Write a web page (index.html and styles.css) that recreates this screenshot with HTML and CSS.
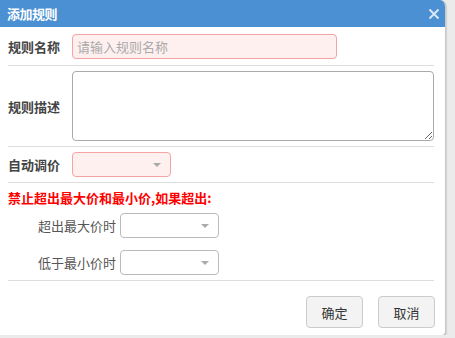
FILE: index.html
```html
<!DOCTYPE html>
<html lang="zh-CN">
<head>
    <meta charset="UTF-8">
    <title>添加规则</title>
    <link rel="stylesheet" href="styles.css">
</head>
<body>
    <div class="dialog">
        <div class="dialog-header">
            <span class="dialog-title">添加规则</span>
            <span class="dialog-close">
                <svg width="12" height="12" viewBox="0 0 12 12">
                    <path d="M1.5 1.5 L10.5 10.5 M10.5 1.5 L1.5 10.5" stroke="#d8e8f7" stroke-width="2"/>
                </svg>
            </span>
        </div>

        <div class="dialog-body">
            <div class="form-row row-name">
                <label class="form-label">规则名称</label>
                <input type="text" class="input required name-input" placeholder="请输入规则名称">
            </div>

            <div class="form-row row-desc">
                <label class="form-label">规则描述</label>
                <textarea class="textarea"></textarea>
            </div>

            <div class="form-row row-auto">
                <label class="form-label">自动调价</label>
                <div class="select required">
                    <span class="caret"></span>
                </div>
            </div>

            <div class="limit-block">
                <div class="warning">禁止超出最大价和最小价,如果超出:</div>
                <div class="sub-row">
                    <label class="sub-label">超出最大价时</label>
                    <div class="select">
                        <span class="caret"></span>
                    </div>
                </div>
                <div class="sub-row">
                    <label class="sub-label">低于最小价时</label>
                    <div class="select">
                        <span class="caret"></span>
                    </div>
                </div>
            </div>
        </div>

        <div class="dialog-footer">
            <button class="btn">确定</button>
            <button class="btn">取消</button>
        </div>
    </div>
</body>
</html>
```

FILE: styles.css
```css
body {
    margin: 0;
    background: #ebebeb;
    font-family: "Noto Sans CJK SC", "Liberation Sans", sans-serif;
    font-size: 13px;
    color: #333;
}

.dialog {
    width: 445px;
    height: 335px;
    background: white;
    border-right: 1px solid #c8c8c8;
    border-radius: 0 6px 4px 0;
    box-shadow: 0 1px 2px rgba(0, 0, 0, 0.35);
    display: flex;
    flex-direction: column;
    overflow: hidden;
}

.dialog-header {
    height: 27px;
    background: #4a90d2;
    display: flex;
    align-items: center;
    justify-content: space-between;
    padding: 0 5px 0 7px;
    flex-shrink: 0;
}

.dialog-title {
    color: white;
    font-weight: bold;
    font-size: 13px;
    letter-spacing: -0.5px;
}

.dialog-close {
    display: flex;
    align-items: center;
}

.dialog-body {
    padding: 0 11px 0 8px;
}

.form-row {
    display: flex;
    align-items: center;
    border-bottom: 1px solid #dddddd;
}

.row-name {
    padding: 7px 0 6px;
}

.row-desc {
    padding: 5px 0 5px;
}

.row-auto {
    padding: 5px 0 5px;
}

.form-label {
    width: 64px;
    flex-shrink: 0;
    font-weight: bold;
    color: #444;
}

.input {
    box-sizing: border-box;
    height: 25px;
    padding: 0 4px;
    border: 1px solid #cccccc;
    border-radius: 4px;
    font-family: inherit;
    font-size: 13px;
    outline: none;
}

.name-input {
    width: 265px;
}

.input::placeholder {
    color: #aaaaaa;
}

.required {
    background: #fff0f0;
    border-color: #f5a3a3 !important;
}

.textarea {
    box-sizing: border-box;
    width: 362px;
    height: 70px;
    border: 1px solid #aaaaaa;
    border-radius: 4px;
    font-family: inherit;
    resize: vertical;
    margin: 0;
}

.select {
    box-sizing: border-box;
    position: relative;
    width: 99px;
    height: 25px;
    border: 1px solid #bbbbbb;
    border-radius: 4px;
    background: white;
}

.select.required {
    background: #fff0f0;
}

.caret {
    position: absolute;
    right: 9px;
    top: 10px;
    width: 0;
    height: 0;
    border-left: 4px solid transparent;
    border-right: 4px solid transparent;
    border-top: 4px solid #aaaaaa;
}

.limit-block {
    border-bottom: 1px solid #dddddd;
    padding: 6px 0 5px;
}

.warning {
    color: #ff0000;
    font-weight: bold;
    line-height: 18px;
    margin-bottom: 6px;
}

.sub-row {
    display: flex;
    align-items: center;
    margin-bottom: 12px;
}

.sub-row:last-child {
    margin-bottom: 0;
}

.sub-label {
    width: 108px;
    padding-right: 4px;
    text-align: right;
    color: #555;
}

.dialog-footer {
    display: flex;
    justify-content: flex-end;
    gap: 15px;
    padding: 15px 10px 0;
}

.btn {
    width: 57px;
    height: 32px;
    background: #f3f3f3;
    border: 1px solid #cccccc;
    border-radius: 4px;
    font-family: inherit;
    font-size: 13px;
    color: #333;
}
```
